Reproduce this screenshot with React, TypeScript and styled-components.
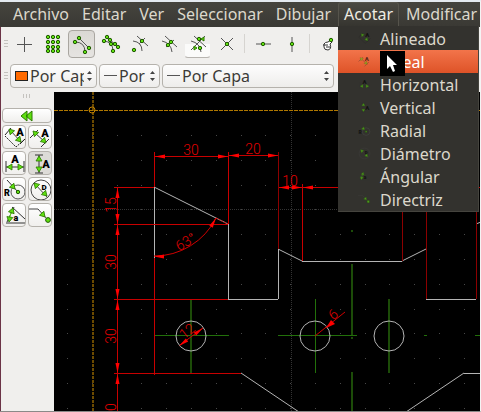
import React from "react";
import styled, { createGlobalStyle } from "styled-components";

const GlobalStyle = createGlobalStyle`
  * { box-sizing: border-box; }
  body { margin: 0; background: #000; font-family: "Noto Sans", "Open Sans", sans-serif; }
  button, select { font-family: inherit; margin: 0; }
`;

const Page = styled.div`
  min-height: 100vh;
  display: flex;
  flex-direction: column;
  border-top: 2px solid #e4eaf0;
  border-right: 1px solid #f4f4f4;
  border-bottom: 1px solid #8a8a88;
  overflow: hidden;
`;

const MenuBar = styled.nav`
  height: 25px;
  flex: none;
  display: flex;
  align-items: stretch;
  gap: 1px;
  background: linear-gradient(#45443e, #3a3934);
  &::before {
    content: "";
    width: 5px;
    height: 12px;
    margin: 6px 9px 0 -3px;
    border-radius: 50%;
    background: #74736e;
  }
`;

const MenuEntry = styled.div`
  position: relative;
  flex: none;
`;

const MenuButton = styled.button<{ $open?: boolean }>`
  height: 25px;
  padding: 0 5px 2px;
  border: 1px solid ${(p) => (p.$open ? "#56544c" : "transparent")};
  border-bottom: 0;
  border-radius: 3px 3px 0 0;
  background: ${(p) => (p.$open ? "linear-gradient(#4a4942, #35342f)" : "transparent")};
  color: ${(p) => (p.$open ? "#eeebe2" : "#dcd8cc")};
  font-size: 16px;
  line-height: 22px;
`;

const Dropdown = styled.ul`
  position: absolute;
  top: 24px;
  left: 0;
  z-index: 5;
  width: 141px;
  margin: 0;
  padding: 1px 0 0;
  list-style: none;
  background: #33322e;
  border: solid #45443e;
  border-width: 0 1px 1px 0;
`;

const DropdownItem = styled.button<{ $active?: boolean }>`
  width: 100%;
  height: 23px;
  padding: 0 0 0 20px;
  display: flex;
  align-items: center;
  gap: 9px;
  border: 0;
  text-align: left;
  background: ${(p) => (p.$active ? "linear-gradient(#f2744a, #de5328)" : "transparent")};
  color: ${(p) => (p.$active ? "#fff" : "#dcd8cc")};
  font-size: 16px;
  line-height: 22px;
  svg { width: 13px; height: 13px; opacity: 0.6; flex: none; }
`;

const Pointer = styled.span`
  position: absolute;
  left: 42px;
  top: 25px;
  width: 25px;
  height: 25px;
  background: #000;
`;

const Toolbars = styled.div`
  flex: none;
  padding: 1px 0 0 3px;
  background: #f0efed;
  border-left: 1px solid #6b3346;
`;

const ToolRow = styled.div`
  display: flex;
  align-items: center;
  gap: 2px;
  height: 31px;
`;

const Handle = styled.span<{ $wide?: boolean }>`
  flex: none;
  width: ${(p) => (p.$wide ? "8px" : "4px")};
  height: ${(p) => (p.$wide ? "4px" : "7px")};
  background: repeating-linear-gradient(${(p) => (p.$wide ? "90deg" : "180deg")}, #c4c2be 0 1px, transparent 1px 3px);
`;

const Tool = styled.button<{ $state?: "on" | "near" }>`
  flex: none;
  width: 27px;
  height: 28px;
  padding: 0;
  display: grid;
  place-items: center;
  border-radius: 4px;
  border: 1px solid ${(p) => (p.$state === "on" ? "#a9a6a0" : "transparent")};
  background: ${(p) =>
    p.$state === "on"
      ? "linear-gradient(#dad8d4, #e6e4e1)"
      : p.$state === "near"
        ? "linear-gradient(transparent 50%, #fbfbfa 50%) padding-box"
        : "transparent"};
  ${(p) => (p.$state === "near" ? "border-bottom-color: #b8b5b0;" : "")}
`;

const Divider = styled.span`
  width: 5px;
  height: 19px;
  background: linear-gradient(90deg, transparent 2px, #d6d4d0 2px 3px, transparent 3px);
`;

const ComboRow = styled(ToolRow)`
  height: 33px;
`;

const Combo = styled.label<{ $w: number }>`
  flex: none;
  width: ${(p) => p.$w}px;
  height: 24px;
  display: flex;
  align-items: center;
  padding: 0 3px 0 4px;
  border: 1px solid #b5b2ac;
  border-radius: 4px;
  background: linear-gradient(#fdfdfd, #eeedeb);
  svg { flex: none; }
`;

const ComboSelect = styled.select`
  appearance: none;
  flex: 1;
  min-width: 0;
  height: 22px;
  padding: 0 2px;
  border: 0;
  background: transparent;
  color: #3c3b37;
  font-size: 16px;
  line-height: 22px;
  text-overflow: clip;
`;

const Swatch = styled.span`
  flex: none;
  width: 13px;
  height: 10px;
  border: 1px solid #222;
  background: #ff6a00;
`;

const Stroke = styled.span`
  flex: none;
  width: 13px;
  height: 1px;
  background: #555;
`;

const Work = styled.div`
  flex: 1;
  display: flex;
  align-items: stretch;
  min-height: 200px;
`;

const Sidebar = styled.aside`
  flex: none;
  width: 54px;
  padding: 2px 2px 0 1px;
  display: flex;
  flex-direction: column;
  align-items: center;
  gap: 10px;
  background: #f0efed;
  border-left: 1px solid #6b3346;
`;

const Palette = styled.div`
  display: grid;
  grid-template-columns: 24px 24px;
  column-gap: 2px;
  row-gap: 2px;
`;

const PaletteButton = styled.button<{ $on?: boolean; $full?: boolean }>`
  height: ${(p) => (p.$full ? "15px" : "24px")};
  grid-column: ${(p) => (p.$full ? "1 / -1" : "auto")};
  padding: 0;
  display: grid;
  place-items: center;
  overflow: hidden;
  border: 1px solid #b5b2ac;
  border-radius: 4px;
  background: ${(p) => (p.$on ? "#dddbd7" : "linear-gradient(#fff, #f0efed)")};
`;

const Canvas = styled.main`
  flex: 1;
  min-width: 0;
  display: flex;
  overflow: hidden;
  background: #000;
  svg { flex: 1; width: 0; }
`;

const GREEN = "#5fe010";
const LEAF = "#2c7a00";

type P = [number, number];

const Dot = ({ p, r = 1.7 }: { p: P; r?: number }) => (
  <circle cx={p[0]} cy={p[1]} r={r} fill={GREEN} stroke="#1f5a00" strokeWidth="1" />
);

/* Triangular head whose tip is at `p`, pointing along `deg` (0 = right). */
const Head = ({ p, deg }: { p: P; deg: number }) => (
  <polygon points="0,0 -10,-2 -10,2" fill="#f00" transform={`translate(${p[0]} ${p[1]}) rotate(${deg})`} />
);

const GHead = ({ p, deg }: { p: P; deg: number }) => (
  <polygon points="0,0 -5,-3 -5,3" fill={GREEN} stroke={LEAF} strokeWidth="0.8" transform={`translate(${p[0]} ${p[1]}) rotate(${deg})`} />
);

const Glyph = ({ x, y, size = 11, children }: { x: number; y: number; size?: number; children: string }) => (
  <text x={x} y={y} fontSize={size} fontWeight="900" fontFamily="Roboto, sans-serif" textAnchor="middle" fill="#000">
    {children}
  </text>
);

type DimKind = "aligned" | "linear" | "horizontal" | "vertical" | "radial" | "diameter" | "angular" | "leader";

const dimShapes: Record<DimKind, React.ReactNode> = {
  aligned: (
    <>
      <path d="M8 2L2 9M23 12L17 18" stroke="#222" />
      <path d="M2 10L13 21L22 13" stroke="#222" strokeDasharray="2 1" />
      <path d="M7 4L18 16" stroke="#444" />
      <GHead p={[6, 3]} deg={228} />
      <GHead p={[18, 16]} deg={48} />
      <Glyph x={17} y={10}>A</Glyph>
    </>
  ),
  linear: (
    <>
      <path d="M1 12L9 4M12 21L20 13M5 6L17 17" stroke="#333" />
      <GHead p={[4, 5]} deg={225} />
      <GHead p={[17, 17]} deg={45} />
      <Glyph x={16} y={11}>A</Glyph>
    </>
  ),
  horizontal: (
    <>
      <path d="M3 9V20M21 9V20M3 15H21" stroke="#333" />
      <GHead p={[4, 15]} deg={180} />
      <GHead p={[20, 15]} deg={0} />
      <Glyph x={12} y={11}>A</Glyph>
    </>
  ),
  vertical: (
    <>
      <path d="M6 3H14M6 21H14M10 3V21" stroke="#333" />
      <GHead p={[10, 4]} deg={270} />
      <GHead p={[10, 20]} deg={90} />
      <Glyph x={17} y={16}>A</Glyph>
    </>
  ),
  radial: (
    <>
      <circle cx="15" cy="14" r="7" stroke="#555" />
      <path d="M4 2L15 14" stroke="#333" />
      <GHead p={[12, 11]} deg={48} />
      <Dot p={[15, 14]} />
      <Glyph x={4} y={18} size={9}>R</Glyph>
    </>
  ),
  diameter: (
    <>
      <circle cx="12" cy="12" r="10" stroke="#444" />
      <path d="M5 5L18 19" stroke="#444" />
      <GHead p={[5, 5]} deg={225} />
      <GHead p={[18, 18]} deg={45} />
      <Glyph x={15} y={12} size={8}>D</Glyph>
    </>
  ),
  angular: (
    <>
      <path d="M3 19H22M4 18L11 3M9 3L22 15" stroke="#333" />
      <path d="M9 7Q6 12 7 17" stroke={GREEN} />
      <GHead p={[10, 4]} deg={290} />
      <GHead p={[6, 18]} deg={100} />
      <Glyph x={13} y={17} size={9}>a</Glyph>
    </>
  ),
  leader: (
    <>
      <path d="M0 5H9L18 15" stroke="#444" />
      <GHead p={[16, 13]} deg={48} />
      <Dot p={[19, 16]} r={2.4} />
    </>
  ),
};

const DimIcon = ({ kind }: { kind: DimKind }) => (
  <svg width="24" height="24" viewBox="0 0 24 24" fill="none" aria-hidden="true">
    {dimShapes[kind]}
  </svg>
);

type SnapKind = "free" | "grid" | "end" | "entity" | "center" | "middle" | "distance" | "cross" | "restrictH" | "restrictV" | "relative";

const dots = (pts: P[]) => pts.map((p) => <Dot key={p.join()} p={p} />);

const snapShapes: Record<SnapKind, React.ReactNode> = {
  free: <path d="M-7 0.5H8M0.5 -7V8" />,
  grid: (
    <>
      {[-7, -2, 3, 7].flatMap((y) => dots([[-5, y], [0, y], [5, y]]))}
    </>
  ),
  end: (
    <>
      <path d="M-3 -6L7 4M-7 -2Q3 -2 3 8" />
      {dots([[-3, -6], [-7, -2], [7, 4], [3, 8]])}
    </>
  ),
  entity: (
    <>
      <path d="M-4 -7L7 3M-7 -3Q2 -2 2 7" />
      {dots([[-4, -7], [-7, -3], [-1, -4], [0, 0], [4, 0], [7, 3], [2, 7]])}
    </>
  ),
  center: (
    <>
      <path d="M-3 -8L8 2M-7 -3Q2 -2 2 7M5 -6L-1 0" />
      {dots([[2, -3], [-6, 6]])}
    </>
  ),
  middle: (
    <>
      <path d="M-4 -8L8 3M-7 -3Q2 -1 3 8M5 -4L-3 3" />
      {dots([[2, -2], [-1, 1]])}
    </>
  ),
  distance: (
    <>
      <path d="M-4 -8L8 3M-7 -3Q2 -1 3 8M7 -8L-7 6" />
      {dots([[1, -5], [2, 4]])}
      <polygon points="3,-5 6,-7 6,-3" fill={GREEN} stroke={LEAF} />
      <polygon points="-1,4 -4,2 -4,6" fill={GREEN} stroke={LEAF} />
    </>
  ),
  cross: (
    <>
      <path d="M-6 -6L6 6M6 -6L-6 6" />
      {dots([[0, 0]])}
    </>
  ),
  restrictH: (
    <>
      <path d="M-7 0H8" />
      {dots([[0, 0]])}
    </>
  ),
  restrictV: (
    <>
      <path d="M0 -7V8" />
      {dots([[0, 0]])}
    </>
  ),
  relative: (
    <>
      <path d="M-4 0Q-3 -2 0 -2L3 -4L4 -2L2 0Q4 5 0 6Q-4 6 -4 3Z" fill="#fff" stroke="#333" />
      <path d="M-5 1H0M-2 3H2" stroke="#333" />
      {dots([[3, -4]])}
    </>
  ),
};

const SnapIcon = ({ kind }: { kind: SnapKind }) => (
  <svg width="24" height="24" viewBox="-12 -12 24 24" fill="none" stroke="#555" aria-hidden="true">
    {snapShapes[kind]}
  </svg>
);

const Spin = () => (
  <svg width="7" height="12" viewBox="0 0 7 12" fill="#444" aria-hidden="true">
    <path d="M1 4L3.500 1L6 4ZM1 8L3.500 11L6 8Z" />
  </svg>
);

const CadText = ({ x, y, deg = 0, children }: { x: number; y: number; deg?: number; children: string }) => (
  <text
    transform={`translate(${x} ${y}) rotate(${deg})`}
    textAnchor="middle"
    fontFamily="Roboto, sans-serif"
    fontWeight="300"
    fontSize="14"
    fill="#e00000"
  >
    {children}
  </text>
);

const gridDots: P[] = Array.from({ length: 17 * 12 }, (_, i) => [
  Math.round(67 + (i % 17) * 24.8),
  Math.round(135 + Math.floor(i / 17) * 24.8),
]);

const Drawing = () => (
  <svg role="img" aria-label="Dibujo" fill="none">
    <g transform="translate(-54 -92)">
      <g shapeRendering="crispEdges">
        {gridDots.map(([x, y]) => (
          <rect key={`${x},${y}`} x={x} y={y} width="1" height="1" fill="#484848" />
        ))}
        <path d="M54 209.500H2000M291.500 92V2000" stroke="#333" strokeDasharray="1 1" />
        <path d="M93 92V2000" stroke="#6b4a00" strokeWidth="2" strokeDasharray="3 1" />
        <path d="M54 110.500H2000" stroke="#b07800" strokeDasharray="4 1" />
        <g stroke="#22700a">
          <path d="M154 335.500H229M278 335.500H357M424 335.500H427M475 335.500H2000M315.500 299V373" />
          <path d="M191 299V373M389 299V373M352 264V335M352 337V339M352 372V2000M352 230V232" stroke="#1c4c08" strokeWidth="2" />
        </g>
      </g>
      <circle cx="92" cy="110" r="3" stroke="#c08000" />

      <g stroke="#b4b4b4">
        <path d="M154 187L228 224M278 249L302 261M402 261L426 249M476 224L481 222M241 373L299 412M406 412L464 373" />
        <path shapeRendering="crispEdges" d="M154.500 187V258M228.500 224V299M228 299.500H278M278.500 249V299M302 261.500H402M426 299.500H476M464 373.500H2000" />
        <circle cx="191" cy="336" r="15" />
        <circle cx="315" cy="336" r="15" />
        <circle cx="389" cy="336" r="15" />
      </g>

      <g shapeRendering="crispEdges" stroke="#c80000">
        <path d="M154 156.500H228M228 155.500H278M154.500 152V187M228.500 152V224M278 187.500H2000M302.500 184V261" />
        <path d="M114 187.500H154M114 224.500H228M114 299.500H228M114 373.500H241M117.500 187V2000M154.500 258V375" />
        <path d="M278.500 152V249M402.500 187V261M426.500 187V299M476.500 187V299" stroke="#8c0000" />
      </g>
      <g stroke="#d00000">
        <path d="M154 256A69 69 0 0 0 216 218" />
        <path d="M216 218L228 224" strokeDasharray="2 1" />
        <path d="M180 345L203 328M315 336L345 312" />
      </g>

      <Head p={[155, 156.5]} deg={180} />
      <Head p={[228, 156.5]} deg={0} />
      <Head p={[229, 155.5]} deg={180} />
      <Head p={[278, 155.5]} deg={0} />
      <Head p={[279, 187.5]} deg={180} />
      <Head p={[302, 187.5]} deg={0} />
      <Head p={[303, 187.5]} deg={180} />
      <Head p={[117.5, 188]} deg={270} />
      <Head p={[117.5, 224]} deg={90} />
      <Head p={[117.5, 225]} deg={270} />
      <Head p={[117.5, 299]} deg={90} />
      <Head p={[117.5, 300]} deg={270} />
      <Head p={[117.5, 373]} deg={90} />
      <Head p={[117.5, 374]} deg={270} />
      <Head p={[154, 256.5]} deg={180} />
      <Head p={[216, 218]} deg={300} />
      <Head p={[179, 346]} deg={143} />
      <Head p={[203, 328]} deg={323} />
      <polygon points="326,328 331,320 335,324" fill="#f00" />

      <CadText x={191} y={155}>30</CadText>
      <CadText x={253} y={154}>20</CadText>
      <CadText x={290} y={186}>10</CadText>
      <CadText x={116} y={205} deg={-90}>15</CadText>
      <CadText x={116} y={262} deg={-90}>30</CadText>
      <CadText x={116} y={336} deg={-90}>30</CadText>
      <CadText x={116} y={407} deg={-90}>0</CadText>
      <CadText x={188} y={246} deg={-30}>63°</CadText>
      <CadText x={190} y={335} deg={-38}>12</CadText>
      <CadText x={336} y={318} deg={-38}>6</CadText>
    </g>
  </svg>
);

const menuItems: [string, DimKind][] = [
  ["Alineado", "aligned"],
  ["Lineal", "linear"],
  ["Horizontal", "horizontal"],
  ["Vertical", "vertical"],
  ["Radial", "radial"],
  ["Diámetro", "diameter"],
  ["Ángular", "angular"],
  ["Directriz", "leader"],
];

const snaps: [SnapKind, string][] = [
  ["free", "Libre"],
  ["grid", "Rejilla"],
  ["end", "Puntos finales"],
  ["entity", "En entidad"],
  ["center", "Centro"],
  ["middle", "Punto medio"],
  ["distance", "Distancia"],
  ["cross", "Intersección"],
];

export default function App() {
  return (
    <>
      <GlobalStyle />
      <Page>
        <MenuBar>
          {["Archivo", "Editar", "Ver", "Seleccionar", "Dibujar", "Acotar", "Modificar"].map((name) => (
            <MenuEntry key={name}>
              <MenuButton $open={name === "Acotar"}>{name}</MenuButton>
              {name === "Acotar" && (
                <Dropdown>
                  {menuItems.map(([label, kind]) => (
                    <li key={label}>
                      <DropdownItem $active={label === "Lineal"}>
                        <DimIcon kind={kind} />
                        {label}
                      </DropdownItem>
                    </li>
                  ))}
                  <Pointer>
                    <svg width="25" height="25" viewBox="0 0 25 25" aria-hidden="true">
                      <path d="M7 4V18L10 15L13 21L15 20L13 14H17Z" fill="#fff" />
                    </svg>
                  </Pointer>
                </Dropdown>
              )}
            </MenuEntry>
          ))}
        </MenuBar>

        <Toolbars>
          <ToolRow>
            <Handle />
            {snaps.map(([kind, label]) => (
              <Tool key={kind} aria-label={label} $state={kind === "end" ? "on" : kind === "distance" ? "near" : undefined}>
                <SnapIcon kind={kind} />
              </Tool>
            ))}
            <Divider />
            <Tool aria-label="Restringir horizontal"><SnapIcon kind="restrictH" /></Tool>
            <Tool aria-label="Restringir vertical"><SnapIcon kind="restrictV" /></Tool>
            <Divider />
            <Tool aria-label="Cero relativo"><SnapIcon kind="relative" /></Tool>
          </ToolRow>
          <ComboRow>
            <Handle />
            <Combo $w={87}>
              <Swatch />
              <ComboSelect aria-label="Color"><option>Por Capa</option></ComboSelect>
              <Spin />
            </Combo>
            <Combo $w={61}>
              <Stroke />
              <ComboSelect aria-label="Ancho"><option>Por</option></ComboSelect>
              <Spin />
            </Combo>
            <Combo $w={172}>
              <Stroke />
              <ComboSelect aria-label="Tipo de línea"><option>Por Capa</option></ComboSelect>
              <Spin />
            </Combo>
          </ComboRow>
        </Toolbars>

        <Work>
          <Sidebar>
            <Handle $wide />
            <Palette>
              <PaletteButton $full aria-label="Atrás">
                <svg width="14" height="12" viewBox="0 0 14 12" fill={GREEN} stroke={LEAF} aria-hidden="true">
                  <path d="M7 1L1 6L7 11ZM12 1L6 6L12 11Z" />
                </svg>
              </PaletteButton>
              {menuItems.map(([label, kind]) => (
                <PaletteButton key={kind} aria-label={label} $on={kind === "vertical"}>
                  <DimIcon kind={kind} />
                </PaletteButton>
              ))}
            </Palette>
          </Sidebar>
          <Canvas>
            <Drawing />
          </Canvas>
        </Work>
      </Page>
    </>
  );
}
